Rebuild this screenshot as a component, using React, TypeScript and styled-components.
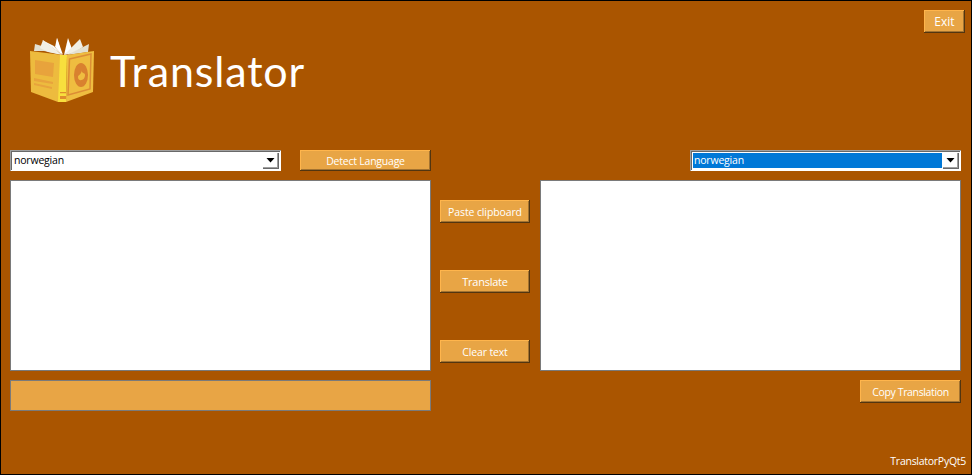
import React from "react";
import styled, { createGlobalStyle } from "styled-components";

const Global = createGlobalStyle`
  * { box-sizing: border-box; }
  body { margin: 0; background: #aa5500; }
`;

const Window = styled.main`
  width: 972px;
  height: 475px;
  border: 1px solid #000;
  background: #aa5500;
  color: #fff;
  padding: 9px 5px 0 9px;
  font: 10.5px/14px "Open Sans", "Noto Sans", sans-serif;
  display: flex;
  flex-direction: column;
  overflow: hidden;
`;

const Header = styled.header`
  display: flex;
  align-items: flex-start;
  width: 955px;
  height: 140px;
`;

const Brand = styled.div`
  display: flex;
  flex: 1;
  padding: 25px 0 0 20px;
`;

const Title = styled.h1`
  margin: 8px 0 0 14px;
  font: 400 43px/56px Lato, "Open Sans", sans-serif;
  letter-spacing: 0.85px;
  white-space: nowrap;
`;

const Button = styled.button<{ $w: number; $h?: number; $size?: number; $track?: number }>`
  width: ${(p) => p.$w}px;
  height: ${(p) => p.$h ?? 23}px;
  flex: none;
  padding: 0;
  border: 0;
  background: #e8a545;
  box-shadow: inset -1px -1px #513510, inset 1px 1px #ffb54c, inset -2px -2px #a37331;
  color: #fff;
  font: inherit;
  font-size: ${(p) => p.$size ?? 10.5}px;
  letter-spacing: ${(p) => p.$track ?? 0}px;
  white-space: nowrap;
`;

const Toolbar = styled.div`
  display: flex;
  justify-content: space-between;
  width: 951px;
  height: 30px;
`;

const Source = styled.div`
  display: flex;
  justify-content: space-between;
  width: 421px;
`;

const Combo = styled.div`
  display: flex;
  width: 271px;
  height: 21px;
  padding: 3px 2px 2px 3px;
  background: #fff;
  box-shadow: inset 1px 1px #a0a0a0, inset -1px -1px #fff, inset 2px 2px #696969;
`;

const Value = styled.span<{ $selected?: boolean }>`
  flex: 1;
  height: 15px;
  padding-left: 1px;
  line-height: 15px;
  letter-spacing: -0.2px;
  color: ${(p) => (p.$selected ? "#fff" : "#000")};
  background: ${(p) => (p.$selected ? "#0078d7" : "#fff")};
`;

const Arrow = styled.span`
  width: 16px;
  height: 16px;
  margin-left: 1px;
  padding: 5px 0 0 3px;
  background: #fff;
  box-shadow: inset -1px -1px #696969, inset -2px -2px #a0a0a0;
  svg { display: block; }
`;

const Workspace = styled.div`
  display: flex;
  width: 951px;
  height: 200px;
`;

const Area = styled.textarea`
  display: block;
  width: 421px;
  height: 191px;
  border: 1px solid #7a7a7a;
  background: #fff;
  resize: none;
  outline: none;
`;

const Actions = styled.div`
  display: flex;
  flex-direction: column;
  gap: 47px;
  padding: 20px 10px 0 9px;
`;

const Bottom = styled.div`
  display: flex;
  justify-content: space-between;
  width: 951px;
  height: 74px;
`;

const Status = styled.div`
  width: 421px;
  height: 31px;
  border: 1px solid #7a7a7a;
  background: #e8a545;
`;

const Footer = styled.footer`
  align-self: flex-end;
  letter-spacing: -0.27px;
`;

const Book = () => (
  <svg width="66" height="68" viewBox="0 0 66 68">
    <path d="M4 16 5 9 15 12 29 19 14 16Z" fill="#e3e0d0" />
    <path d="M10 13 13 5 32 20 18 17Z" fill="#f1efe5" />
    <path d="M26 13 27 3 32 20Z" fill="#fff" />
    <path d="M12 5 24 11 32 20Z" fill="#f8f7f1" />
    <path d="M25 12 27 3 33 20Z" fill="#fff" />
    <path d="M34 20 38 3 42 14Z" fill="#fff" />
    <path d="M34 20 50 4 53 12 44 18Z" fill="#f1efe5" />
    <path d="M37 20 59 9 58 17Z" fill="#e3e0d0" />
    <path d="M0 16 33 20 34 67 28 67 1 57Z" fill="#edbb3e" />
    <path d="M30 20 37 20 36 67 28 67Z" fill="#f8df3d" />
    <path d="M37 20 64 16 63 57 36 67Z" fill="#efbd40" />
    <path d="M5 25 24 28 23 42 5 39Z" fill="#e8a33c" />
    <path d="M4 43 23 47 23 49 4 46ZM4 48 22 52 22 54 4 50Z" fill="#e8a33c" />
    <path d="M39.5 24 61 19 60 54 38 60Z" fill="none" stroke="#dc8d35" strokeWidth="1.5" />
    <ellipse cx="51" cy="40" rx="7" ry="12" fill="#d9812f" />
    <path d="M52 35c-1 4 3 2 3 5 0 6-7 7-7 2 0-2 3-2 4-7Z" fill="#efbd40" />
    <path d="M30 57h6v1.2h-6zM30 61h6v3h-6z" fill="#df8c2d" />
  </svg>
);

function LanguageSelect({ selected }: { selected?: boolean }) {
  return (
    <Combo>
      <Value $selected={selected}>norwegian</Value>
      <Arrow>
        <svg width="9" height="5"><path d="M0.5 0H8.5L4.5 4.5Z" /></svg>
      </Arrow>
    </Combo>
  );
}

export default function App() {
  return (
    <>
      <Global />
      <Window>
        <Header>
          <Brand>
            <Book />
            <Title>Translator</Title>
          </Brand>
          <Button $w={41} $size={12}>Exit</Button>
        </Header>
        <Toolbar>
          <Source>
            <LanguageSelect />
            <Button $w={131} $h={21} $track={-0.23}>Detect Language</Button>
          </Source>
          <LanguageSelect selected />
        </Toolbar>
        <Workspace>
          <Area aria-label="Source text" />
          <Actions>
            <Button $w={90} $track={-0.12}>Paste clipboard</Button>
            <Button $w={90} $size={11} $track={-0.25}>Translate</Button>
            <Button $w={90} $track={-0.15}>Clear text</Button>
          </Actions>
          <Area aria-label="Translation" />
        </Workspace>
        <Bottom>
          <Status />
          <Button $w={101} $track={-0.36}>Copy Translation</Button>
        </Bottom>
        <Footer>TranslatorPyQt5</Footer>
      </Window>
    </>
  );
}
